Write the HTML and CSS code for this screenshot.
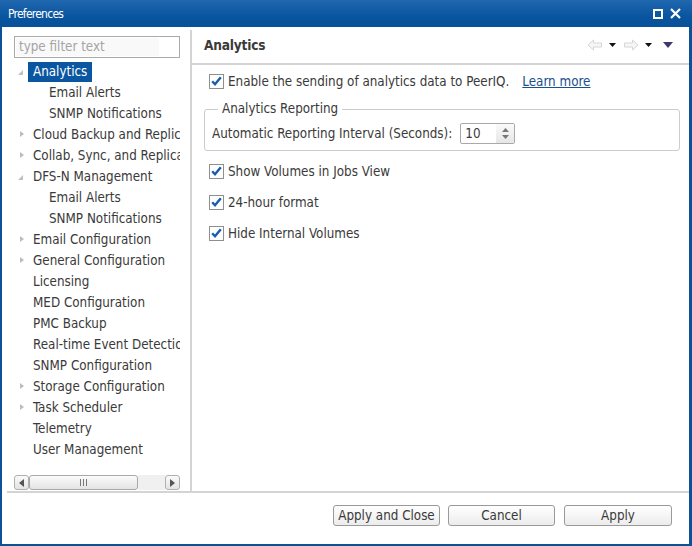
FILE: index.html
```html
<!DOCTYPE html>
<html>
<head>
<meta charset="utf-8">
<link rel="stylesheet" href="styles.css">
</head>
<body>
<div class="window">
  <div class="titlebar">
    <span class="title">Preferences</span>
    <div class="tb-icons">
      <svg width="10" height="10" viewBox="0 0 10 10"><rect x="1" y="1" width="8" height="8" fill="none" stroke="#fff" stroke-width="2"/></svg>
      <svg width="11" height="11" viewBox="0 0 11 11"><path d="M1 1 L10 10 M10 1 L1 10" stroke="#fff" stroke-width="2.2"/></svg>
    </div>
  </div>
  <div class="body">
    <div class="main">
      <aside class="left">
        <div class="filter"><span class="filter-inner">type filter text</span></div>
        <ul class="tree">
          <li class="row"><span class="tw open"></span><span class="lbl sel">Analytics</span></li>
          <li class="row child"><span class="lbl">Email Alerts</span></li>
          <li class="row child"><span class="lbl">SNMP Notifications</span></li>
          <li class="row"><span class="tw"></span><span class="lbl">Cloud Backup and Replication</span></li>
          <li class="row"><span class="tw"></span><span class="lbl">Collab, Sync, and Replication</span></li>
          <li class="row"><span class="tw open"></span><span class="lbl">DFS-N Management</span></li>
          <li class="row child"><span class="lbl">Email Alerts</span></li>
          <li class="row child"><span class="lbl">SNMP Notifications</span></li>
          <li class="row"><span class="tw"></span><span class="lbl">Email Configuration</span></li>
          <li class="row"><span class="tw"></span><span class="lbl">General Configuration</span></li>
          <li class="row"><span class="tw none"></span><span class="lbl">Licensing</span></li>
          <li class="row"><span class="tw none"></span><span class="lbl">MED Configuration</span></li>
          <li class="row"><span class="tw none"></span><span class="lbl">PMC Backup</span></li>
          <li class="row"><span class="tw none"></span><span class="lbl">Real-time Event Detection</span></li>
          <li class="row"><span class="tw none"></span><span class="lbl">SNMP Configuration</span></li>
          <li class="row"><span class="tw"></span><span class="lbl">Storage Configuration</span></li>
          <li class="row"><span class="tw"></span><span class="lbl">Task Scheduler</span></li>
          <li class="row"><span class="tw none"></span><span class="lbl">Telemetry</span></li>
          <li class="row"><span class="tw none"></span><span class="lbl">User Management</span></li>
        </ul>
        <div class="hscroll">
          <div class="sb-btn"><svg width="5" height="8" viewBox="0 0 5 8"><path d="M5 0 L0 4 L5 8 Z" fill="#555"/></svg></div>
          <div class="sb-thumb"><span class="grip"></span><span class="grip"></span><span class="grip"></span></div>
          <div class="sb-track"></div>
          <div class="sb-btn"><svg width="5" height="8" viewBox="0 0 5 8"><path d="M0 0 L5 4 L0 8 Z" fill="#555"/></svg></div>
        </div>
      </aside>
      <div class="vsep"></div>
      <section class="right">
        <div class="rhead">
          <span class="rtitle">Analytics</span>
          <div class="nav">
            <svg width="16" height="12" viewBox="0 0 16 12"><path d="M1 6 L6.5 1 L6.5 4 L14.5 4 L14.5 8 L6.5 8 L6.5 11 Z" fill="#f6f6f6" stroke="#d6d6d6"/></svg>
            <svg class="dd" width="7" height="4" viewBox="0 0 7 4"><path d="M0 0 L7 0 L3.5 4 Z" fill="#111"/></svg>
            <svg width="16" height="12" viewBox="0 0 16 12"><path d="M15 6 L9.5 1 L9.5 4 L1.5 4 L1.5 8 L9.5 8 L9.5 11 Z" fill="#f6f6f6" stroke="#d6d6d6"/></svg>
            <svg class="dd" width="7" height="4" viewBox="0 0 7 4"><path d="M0 0 L7 0 L3.5 4 Z" fill="#111"/></svg>
            <svg class="dd2" width="10" height="6" viewBox="0 0 10 6"><path d="M0 0 L10 0 L5 6 Z" fill="#3d3a6a"/></svg>
          </div>
        </div>
        <div class="rcontent">
          <div class="cbrow first">
            <span class="cb"><svg width="11" height="10" viewBox="0 0 11 10"><path d="M1.2 5.2 L4 8.2 L9.8 1.2" fill="none" stroke="#1b5cb0" stroke-width="2.4"/></svg></span>
            <span class="cbl">Enable the sending of analytics data to PeerIQ.</span>
            <a class="link">Learn more</a>
          </div>
          <fieldset class="group">
            <legend>Analytics Reporting</legend>
            <div class="irow">
              <span>Automatic Reporting Interval (Seconds):</span>
              <div class="spin">
                <span class="spin-val">10</span>
                <span class="spin-btns">
                  <svg width="7" height="4" viewBox="0 0 7 4"><path d="M0 4 L3.5 0 L7 4 Z" fill="#777"/></svg>
                  <svg width="7" height="4" viewBox="0 0 7 4"><path d="M0 0 L7 0 L3.5 4 Z" fill="#777"/></svg>
                </span>
              </div>
            </div>
          </fieldset>
          <div class="cbrow after-group">
            <span class="cb"><svg width="11" height="10" viewBox="0 0 11 10"><path d="M1.2 5.2 L4 8.2 L9.8 1.2" fill="none" stroke="#1b5cb0" stroke-width="2.4"/></svg></span>
            <span class="cbl">Show Volumes in Jobs View</span>
          </div>
          <div class="cbrow">
            <span class="cb"><svg width="11" height="10" viewBox="0 0 11 10"><path d="M1.2 5.2 L4 8.2 L9.8 1.2" fill="none" stroke="#1b5cb0" stroke-width="2.4"/></svg></span>
            <span class="cbl">24-hour format</span>
          </div>
          <div class="cbrow">
            <span class="cb"><svg width="11" height="10" viewBox="0 0 11 10"><path d="M1.2 5.2 L4 8.2 L9.8 1.2" fill="none" stroke="#1b5cb0" stroke-width="2.4"/></svg></span>
            <span class="cbl">Hide Internal Volumes</span>
          </div>
        </div>
      </section>
    </div>
    <div class="footer">
      <button class="btn">Apply and Close</button>
      <button class="btn">Cancel</button>
      <button class="btn wide">Apply</button>
    </div>
  </div>
</div>
</body>
</html>
```
FILE: styles.css
```css
* { box-sizing: border-box; }
html, body { margin: 0; padding: 0; }
body {
  font-family: "DejaVu Sans Condensed", "DejaVu Sans", sans-serif;
  font-size: 13.3px;
  color: #3a3a3a;
  width: 692px;
  height: 546px;
  overflow: hidden;
}
.window {
  width: 692px;
  height: 546px;
  background: #0b5296;
  padding: 0 3px 2px 2px;
  display: flex;
  flex-direction: column;
}
.titlebar {
  height: 27px;
  margin: 0 -3px 0 -2px;
  padding: 0 11px 0 8px;
  background: linear-gradient(#2068b0, #0a559f 60%, #07509a);
  display: flex;
  align-items: center;
  justify-content: space-between;
  color: #fff;
}
.title { font-size: 12px; letter-spacing: -0.75px; }
.tb-icons { display: flex; align-items: center; gap: 7px; }
.tb-icons svg { display: block; }
.body {
  flex: 1;
  background: #fff;
  display: flex;
  flex-direction: column;
}
.main {
  height: 464px;
  display: flex;
}
.left {
  width: 188px;
  display: flex;
  flex-direction: column;
  padding: 9px 0 1px 0;
}
.filter {
  margin-left: 12px;
  width: 166px;
  height: 22px;
  border: 1px solid #aaaaaa;
  background: #fff;
  padding: 1px;
  display: flex;
}
.filter-inner {
  width: 143px;
  background: #f9f9f9;
  color: #a4a4a4;
  padding-left: 3px;
  line-height: 18px;
  font-size: 13.3px;
  white-space: nowrap;
}
.tree {
  list-style: none;
  margin: 3px 0 0 0;
  padding: 0;
}
.row {
  height: 21px;
  display: flex;
  align-items: center;
  white-space: nowrap;
  overflow: hidden;
  width: 178px;
}
.tw {
  width: 26px;
  height: 21px;
  flex: none;
  position: relative;
}
.tw::after {
  content: "";
  position: absolute;
  left: 18px;
  top: 7px;
  width: 0; height: 0;
  border-left: 4px solid #bdbdbd;
  border-top: 3.5px solid transparent;
  border-bottom: 3.5px solid transparent;
}
.tw.open::after {
  left: 16px;
  top: 9px;
  border: none;
  border-right: 5px solid #c0c0c0;
  border-top: 5px solid transparent;
}
.tw.none::after { display: none; }
.lbl {
  padding: 0 5px;
  line-height: 20px;
}
.child .lbl { margin-left: 42px; }
.lbl.sel {
  background: #0a56a0;
  color: #fff;
}
.hscroll {
  margin: auto 0 0 12px;
  width: 166px;
  height: 15px;
  display: flex;
}
.sb-btn {
  width: 15px;
  height: 15px;
  border: 1px solid #b0b0b0;
  border-radius: 3px;
  background: linear-gradient(#fafafa, #e4e4e4);
  display: flex;
  align-items: center;
  justify-content: center;
}
.sb-thumb {
  width: 109px;
  height: 15px;
  border: 1px solid #a8a8a8;
  border-radius: 3px;
  background: linear-gradient(#fbfbfb, #e3e3e3);
  display: flex;
  align-items: center;
  justify-content: center;
  gap: 2px;
}
.grip { width: 1px; height: 7px; background: #777; }
.sb-track { flex: 1; background: #f0f0f0; }
.vsep {
  width: 2px;
  margin-top: 3px;
  background: #d4d4d4;
}
.right {
  flex: 1;
  display: flex;
  flex-direction: column;
}
.rhead {
  height: 38px;
  border-bottom: 2px solid #d4d4d4;
  display: flex;
  align-items: center;
  justify-content: space-between;
  padding: 0 16px 0 12px;
}
.rtitle {
  font-weight: bold;
  font-size: 13.6px;
  color: #3a3a3a;
  letter-spacing: -0.2px;
}
.nav { display: flex; align-items: center; }
.nav svg { display: block; }
.nav .dd { margin: 0 7px 0 6px; }
.nav .dd2 { margin-left: 4px; }
.rcontent {
  display: flex;
  flex-direction: column;
  padding: 8px 9px 0 12px;
}
.cbrow {
  height: 16px;
  display: flex;
  align-items: center;
  margin: 15px 0 0 5px;
}
.cbrow.first { margin-top: 0; }
.cbrow.after-group { margin-top: 12px; }
.cb {
  width: 15px;
  height: 15px;
  border: 1px solid #8e8f8f;
  background: #fff;
  display: flex;
  align-items: center;
  justify-content: center;
  margin-right: 4px;
  flex: none;
}
.cb svg { display: block; }
.cbl { white-space: nowrap; }
.link {
  margin-left: 13px;
  color: #1b4f8f;
  text-decoration: underline;
}
.group {
  margin: 12px 0 0 0;
  padding: 0 7px 6px 7px;
  border: 1px solid #cccccc;
  border-radius: 3px;
}
.group legend {
  padding: 0 4px;
  margin-left: 6px;
  line-height: 16px;
}
.irow {
  display: flex;
  align-items: center;
  gap: 8px;
  margin-top: 6px;
  white-space: nowrap;
}
.spin {
  width: 55px;
  height: 21px;
  border: 1px solid #a9a9a9;
  border-radius: 2px;
  display: flex;
  align-items: stretch;
}
.spin-val { flex: 1; padding-left: 4px; line-height: 19px; }
.spin-btns {
  width: 18px;
  background: linear-gradient(#fafafa, #e6e6e6);
  display: flex;
  flex-direction: column;
  align-items: center;
  justify-content: center;
  gap: 3px;
}
.spin-btns svg { display: block; }
.footer {
  flex: 1;
  border-top: 2px solid #d4d4d4;
  margin-left: 5px;
  display: flex;
  justify-content: flex-end;
  align-items: flex-start;
  padding: 12px 17px 0 0;
  gap: 8px;
}
.btn {
  width: 107px;
  height: 21px;
  border: 1px solid #9a9a9a;
  border-radius: 3px;
  background: linear-gradient(#ffffff, #ececec);
  font-family: inherit;
  font-size: 13.3px;
  color: #3a3a3a;
  padding: 0;
}
.btn.wide { width: 108px; margin-left: 1px; }
```
